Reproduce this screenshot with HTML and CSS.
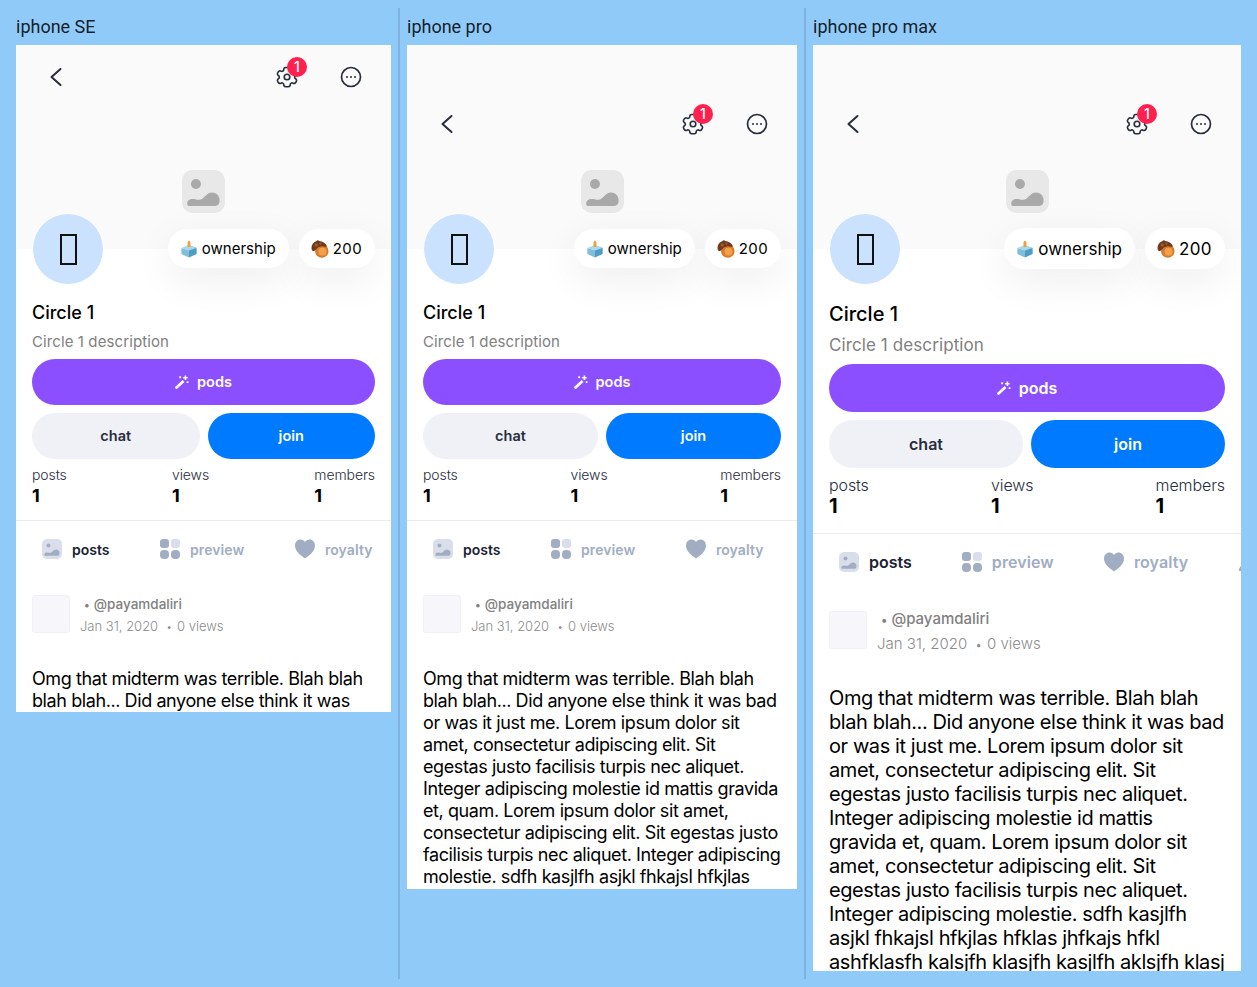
FILE: index.html
```html
<!DOCTYPE html>
<html lang="en">
<head>
<meta charset="utf-8">
<title>Circle devices</title>
<link rel="stylesheet" href="styles.css">
</head>
<body>
<svg class="sprites" width="0" height="0" aria-hidden="true">
  <symbol id="i-back" viewBox="0 0 24 24"><path d="M16.500 4 7.500 12l9 8" fill="none" stroke="#272d3d" stroke-width="2" stroke-linecap="round" stroke-linejoin="round"/></symbol>
  <symbol id="i-gear" viewBox="0 0 24 24"><g fill="none" stroke="#272d3d" stroke-width="1.6" stroke-linejoin="round"><circle cx="12" cy="12" r="2.800"/><path d="M21.300 7.900l-.6-1.100a1.900 1.900 0 0 0-2.600-.7 1.900 1.900 0 0 1-2.900-1.600c0-1-.9-2-1.900-2h-2.600c-1 0-1.900 1-1.900 2A1.900 1.900 0 0 1 5.900 6.100a1.900 1.900 0 0 0-2.600.7l-.6 1.100a1.900 1.900 0 0 0 .7 2.600 1.900 1.900 0 0 1 0 3.300 1.900 1.900 0 0 0-.7 2.600l.6 1.100a1.900 1.900 0 0 0 2.600.7 1.900 1.900 0 0 1 2.900 1.600c0 1 .9 1.900 1.900 1.900h2.600c1 0 1.900-.9 1.900-1.900a1.900 1.900 0 0 1 2.900-1.600 1.900 1.900 0 0 0 2.600-.7l.6-1.100a1.900 1.900 0 0 0-.7-2.600 1.900 1.900 0 0 1 0-3.300 1.900 1.900 0 0 0 .7-2.600z"/></g></symbol>
  <symbol id="i-more" viewBox="0 0 24 24"><circle cx="12" cy="12" r="9.500" fill="none" stroke="#272d3d" stroke-width="1.7"/><g fill="#272d3d"><circle cx="8" cy="12" r="1"/><circle cx="12" cy="12" r="1"/><circle cx="16" cy="12" r="1"/></g></symbol>
  <symbol id="i-pic" viewBox="0 0 20 20"><rect width="20" height="20" rx="5" fill="#d9deea"/><circle cx="6.500" cy="6.500" r="2" fill="#a1adc2"/><path d="M3.500 16.800c-1.500 0-1.500-2.500.2-3.100 1.800-.6 3.300.6 5 0 2-.7 2.800-3.200 5.300-3.200 2.300 0 3.500 1.900 3.500 3.700 0 1.800-1 2.600-2.500 2.600z" fill="#a1adc2"/></symbol>
  <symbol id="i-cover" viewBox="0 0 20 20"><rect width="20" height="20" rx="5" fill="#e8e8e8"/><circle cx="6.500" cy="6.500" r="2.300" fill="#a9a9a9"/><path d="M3.500 16.800c-1.500 0-1.500-2.500.2-3.100 1.800-.6 3.300.6 5 0 2-.7 2.800-3.200 5.300-3.200 2.300 0 3.500 1.900 3.500 3.700 0 1.800-1 2.600-2.500 2.600z" fill="#a9a9a9"/></symbol>
  <symbol id="i-grid" viewBox="0 0 20 20"><rect width="9" height="9" rx="3" fill="#a1adc2"/><rect x="11" width="9" height="9" rx="3" fill="#d9deea"/><rect y="11" width="9" height="9" rx="4" fill="#a1adc2"/><rect x="11" y="11" width="9" height="9" rx="4" fill="#a1adc2"/></symbol>
  <symbol id="i-heart" viewBox="0 0 20 20"><path d="M10 19.500C6 16.500 0 12.500 0 6.500 0 3 2.500.5 5.500.5c2 0 3.500 1 4.500 2.500C11 1.500 12.500.5 14.500.5 17.500.5 20 3 20 6.500c0 6-6 10-10 13z" fill="#a1adc2"/></symbol>
  <symbol id="i-person" viewBox="0 0 20 20"><circle cx="10" cy="6" r="4.500" fill="#d9deea"/><path d="M1 19c0-5 4-7 9-7s9 2 9 7z" fill="#a1adc2"/></symbol>
  <symbol id="i-wand" viewBox="0 0 16 16"><g fill="#fff"><path d="M.6 13.200 8.800 5.800l2 2.100-8 7.500a1.500 1.500 0 0 1-2.100-.1 1.500 1.500 0 0 1-.1-2.100z"/><rect x="4.800" y="1.500" width="2.200" height="2.200" rx=".5"/><path d="M11 .5h1.800v1.700h1.700V4h-1.700v1.700H11V4H9.300V2.200H11z"/><rect x="13.300" y="7" width="2.200" height="2.200" rx=".5"/></g></symbol>
  <symbol id="i-box" viewBox="0 0 20 20"><path d="M10 6l8.500 2.800v6.800L10 19.500z" fill="#4f9cc4"/><path d="M1.500 8.800 10 11.500v8l-8.500-3.900z" fill="#7fbfdc"/><path d="M10 5.500l8.500 3.300-8.500 3-8.500-3z" fill="#a9d8ea"/><path d="M8.300 3.500C8.300 2 9.200 1 10 .7c.8.300 1.700 1.300 1.700 2.800v4c-1.100.5-2.300.5-3.400 0z" fill="#f0a040"/></symbol>
  <symbol id="i-acorn" viewBox="0 0 20 20"><circle cx="12" cy="12.300" r="7.500" fill="#d9792a"/><circle cx="12.800" cy="13" r="4.500" fill="#f2a04a"/><path d="M1.100 11.500C-.5 7.500 1.500 2.500 5.700 1.300c1.200-1.200 2.600-1.300 3.300-.2 4 .2 7 2.300 8.300 5 .5 1.300-.5 2-1.700 1.500-3.100-1.200-7.400-.5-9.600 2.400-1 1.500-3.900 3.500-4.900 1.500z" fill="#6f3a1c"/><circle cx="5.800" cy="5.500" r="1.900" fill="#9a5a2c"/><circle cx="10.500" cy="4" r="1.300" fill="#9a5a2c"/></symbol>
</svg>

<main class="devices">

  <section class="device">
    <h2 class="device-name">iphone SE</h2>
    <article class="phone phone-se">
      <header class="cover">
        <nav class="nav">
          <button class="nav-btn"><svg class="nav-icon"><use href="#i-back"/></svg></button>
          <div class="nav-right">
            <button class="nav-btn"><svg class="nav-icon"><use href="#i-gear"/></svg><span class="count">1</span></button>
            <button class="nav-btn"><svg class="nav-icon"><use href="#i-more"/></svg></button>
          </div>
        </nav>
        <svg class="cover-pic"><use href="#i-cover"/></svg>
      </header>
      <div class="profile">
        <div class="profile-top">
          <div class="avatar"><span class="tofu"></span></div>
          <div class="chips">
            <span class="chip"><svg class="chip-icon"><use href="#i-box"/></svg>ownership</span>
            <span class="chip chip-num"><svg class="chip-icon"><use href="#i-acorn"/></svg>200</span>
          </div>
        </div>
        <h1 class="title">Circle 1</h1>
        <p class="desc">Circle 1 description</p>
        <button class="btn btn-pods"><svg class="wand"><use href="#i-wand"/></svg>pods</button>
        <div class="btn-row">
          <button class="btn btn-chat">chat</button>
          <button class="btn btn-join">join</button>
        </div>
        <dl class="stats">
          <div class="stat"><dt>posts</dt><dd>1</dd></div>
          <div class="stat"><dt>views</dt><dd>1</dd></div>
          <div class="stat"><dt>members</dt><dd>1</dd></div>
        </dl>
      </div>
      <div class="tabs">
        <span class="tab tab-active"><svg class="tab-icon"><use href="#i-pic"/></svg>posts</span>
        <span class="tab"><svg class="tab-icon"><use href="#i-grid"/></svg>preview</span>
        <span class="tab"><svg class="tab-icon"><use href="#i-heart"/></svg>royalty</span>
        <span class="tab"><svg class="tab-icon"><use href="#i-person"/></svg>members</span>
      </div>
      <div class="post">
        <div class="post-head">
          <div class="post-avatar"></div>
          <div class="post-meta">
            <div class="post-author"><span class="dot">•</span>@payamdaliri</div>
            <div class="post-date">Jan 31, 2020<span class="dot dot-wide">•</span>0 views</div>
          </div>
        </div>
        <p class="post-body">Omg that midterm was terrible. Blah blah blah blah... Did anyone else think it was bad or was it just me. Lorem ipsum dolor sit amet, consectetur adipiscing elit. Sit egestas justo facilisis turpis nec aliquet. Integer adipiscing molestie id mattis gravida et, quam. Lorem ipsum dolor sit amet, consectetur adipiscing elit. Sit egestas justo facilisis turpis nec aliquet. Integer adipiscing molestie. sdfh kasjlfh asjkl fhkajsl hfkjlas hfklas jhfkajs hfkl ashfklasfh kalsjfh klasjfh kasjlfh aklsjfh klasj</p>
      </div>
    </article>
  </section>

  <section class="device">
    <h2 class="device-name">iphone pro</h2>
    <article class="phone phone-pro">
      <header class="cover">
        <nav class="nav">
          <button class="nav-btn"><svg class="nav-icon"><use href="#i-back"/></svg></button>
          <div class="nav-right">
            <button class="nav-btn"><svg class="nav-icon"><use href="#i-gear"/></svg><span class="count">1</span></button>
            <button class="nav-btn"><svg class="nav-icon"><use href="#i-more"/></svg></button>
          </div>
        </nav>
        <svg class="cover-pic"><use href="#i-cover"/></svg>
      </header>
      <div class="profile">
        <div class="profile-top">
          <div class="avatar"><span class="tofu"></span></div>
          <div class="chips">
            <span class="chip"><svg class="chip-icon"><use href="#i-box"/></svg>ownership</span>
            <span class="chip chip-num"><svg class="chip-icon"><use href="#i-acorn"/></svg>200</span>
          </div>
        </div>
        <h1 class="title">Circle 1</h1>
        <p class="desc">Circle 1 description</p>
        <button class="btn btn-pods"><svg class="wand"><use href="#i-wand"/></svg>pods</button>
        <div class="btn-row">
          <button class="btn btn-chat">chat</button>
          <button class="btn btn-join">join</button>
        </div>
        <dl class="stats">
          <div class="stat"><dt>posts</dt><dd>1</dd></div>
          <div class="stat"><dt>views</dt><dd>1</dd></div>
          <div class="stat"><dt>members</dt><dd>1</dd></div>
        </dl>
      </div>
      <div class="tabs">
        <span class="tab tab-active"><svg class="tab-icon"><use href="#i-pic"/></svg>posts</span>
        <span class="tab"><svg class="tab-icon"><use href="#i-grid"/></svg>preview</span>
        <span class="tab"><svg class="tab-icon"><use href="#i-heart"/></svg>royalty</span>
        <span class="tab"><svg class="tab-icon"><use href="#i-person"/></svg>members</span>
      </div>
      <div class="post">
        <div class="post-head">
          <div class="post-avatar"></div>
          <div class="post-meta">
            <div class="post-author"><span class="dot">•</span>@payamdaliri</div>
            <div class="post-date">Jan 31, 2020<span class="dot dot-wide">•</span>0 views</div>
          </div>
        </div>
        <p class="post-body">Omg that midterm was terrible. Blah blah blah blah... Did anyone else think it was bad or was it just me. Lorem ipsum dolor sit amet, consectetur adipiscing elit. Sit egestas justo facilisis turpis nec aliquet. Integer adipiscing molestie id mattis gravida et, quam. Lorem ipsum dolor sit amet, consectetur adipiscing elit. Sit egestas justo facilisis turpis nec aliquet. Integer adipiscing molestie. sdfh kasjlfh asjkl fhkajsl hfkjlas hfklas jhfkajs hfkl ashfklasfh kalsjfh klasjfh kasjlfh aklsjfh klasj</p>
      </div>
    </article>
  </section>

  <section class="device">
    <h2 class="device-name">iphone pro max</h2>
    <article class="phone phone-max">
      <header class="cover">
        <nav class="nav">
          <button class="nav-btn"><svg class="nav-icon"><use href="#i-back"/></svg></button>
          <div class="nav-right">
            <button class="nav-btn"><svg class="nav-icon"><use href="#i-gear"/></svg><span class="count">1</span></button>
            <button class="nav-btn"><svg class="nav-icon"><use href="#i-more"/></svg></button>
          </div>
        </nav>
        <svg class="cover-pic"><use href="#i-cover"/></svg>
      </header>
      <div class="profile">
        <div class="profile-top">
          <div class="avatar"><span class="tofu"></span></div>
          <div class="chips">
            <span class="chip"><svg class="chip-icon"><use href="#i-box"/></svg>ownership</span>
            <span class="chip chip-num"><svg class="chip-icon"><use href="#i-acorn"/></svg>200</span>
          </div>
        </div>
        <h1 class="title">Circle 1</h1>
        <p class="desc">Circle 1 description</p>
        <button class="btn btn-pods"><svg class="wand"><use href="#i-wand"/></svg>pods</button>
        <div class="btn-row">
          <button class="btn btn-chat">chat</button>
          <button class="btn btn-join">join</button>
        </div>
        <dl class="stats">
          <div class="stat"><dt>posts</dt><dd>1</dd></div>
          <div class="stat"><dt>views</dt><dd>1</dd></div>
          <div class="stat"><dt>members</dt><dd>1</dd></div>
        </dl>
      </div>
      <div class="tabs">
        <span class="tab tab-active"><svg class="tab-icon"><use href="#i-pic"/></svg>posts</span>
        <span class="tab"><svg class="tab-icon"><use href="#i-grid"/></svg>preview</span>
        <span class="tab"><svg class="tab-icon"><use href="#i-heart"/></svg>royalty</span>
        <span class="tab"><svg class="tab-icon"><use href="#i-person"/></svg>members</span>
      </div>
      <div class="post">
        <div class="post-head">
          <div class="post-avatar"></div>
          <div class="post-meta">
            <div class="post-author"><span class="dot">•</span>@payamdaliri</div>
            <div class="post-date">Jan 31, 2020<span class="dot dot-wide">•</span>0 views</div>
          </div>
        </div>
        <p class="post-body">Omg that midterm was terrible. Blah blah blah blah... Did anyone else think it was bad or was it just me. Lorem ipsum dolor sit amet, consectetur adipiscing elit. Sit egestas justo facilisis turpis nec aliquet. Integer adipiscing molestie id mattis gravida et, quam. Lorem ipsum dolor sit amet, consectetur adipiscing elit. Sit egestas justo facilisis turpis nec aliquet. Integer adipiscing molestie. sdfh kasjlfh asjkl fhkajsl hfkjlas hfklas jhfkajs hfkl ashfklasfh kalsjfh klasjfh kasjlfh aklsjfh klasj</p>
      </div>
    </article>
  </section>

</main>
</body>
</html>
```
FILE: styles.css
```css
* { box-sizing: border-box; }

html, body { height: 100%; }

body {
  margin: 0;
  background: #90caf9;
  font-family: Inter, "Liberation Sans", sans-serif;
  color: #000;
}

.sprites { position: absolute; }

.devices {
  display: flex;
  height: 987px;
  padding: 8px 0 8px 9px;
}

.device {
  flex: none;
  padding: 0 7px;
  border-right: 2px solid #7fb2df;
}

.device:last-child { border-right: 0; }

.device-name {
  margin: 0 0 8px;
  padding-top: 8px;
  font: 400 18px/21px Roboto, sans-serif;
  color: rgba(0, 0, 0, .87);
}

.phone {
  display: flex;
  flex-direction: column;
  overflow: hidden;
  background: #fff;
  --side: 16px;
  --nav-top: 10px;
  --title: 18px;
  --title-lh: 22px;
  --title-mb: 9px;
  --desc: 15px;
  --desc-lh: 18px;
  --desc-mb: 8px;
  --btn-h: 46px;
  --btn: 14.500px;
  --label: 14px;
  --label-lh: 17px;
  --stat-top: 7px;
  --stat-gap: 2px;
  --stat-pb: 13px;
  --value: 18px;
  --value-lh: 22px;
  --tab: 14px;
  --tab-gap: 50.500px;
  --author: 13.500px;
  --date: 13px;
  --meta-lh: 21px;
  --meta-top: -1px;
  --post-gap: 18px;
  --body: 18px;
  --body-lh: 22px;
  --body-top: 35px;
  --chip: 15px;
  --chip-h: 39px;
  --chip-top: 16px;
}

.phone-se { width: 375px; height: 667px; }
.phone-pro { width: 390px; height: 844px; --nav-top: 57px; }
.phone-max {
  width: 428px;
  height: 926px;
  --nav-top: 57px;
  --title: 20px;
  --title-lh: 24px;
  --title-mb: 8px;
  --desc: 17px;
  --desc-lh: 22px;
  --desc-mb: 8px;
  --btn-h: 48px;
  --btn: 16px;
  --label: 16px;
  --label-lh: 19px;
  --stat-top: 8px;
  --stat-gap: -1px;
  --stat-pb: 15px;
  --value: 20px;
  --value-lh: 24px;
  --tab: 16px;
  --tab-gap: 50px;
  --author: 15px;
  --date: 15px;
  --meta-lh: 24px;
  --meta-top: -4px;
  --post-gap: 21px;
  --body: 20px;
  --body-lh: 24px;
  --body-top: 37px;
  --chip: 17px;
  --chip-h: 41px;
  --chip-top: 15px;
}

.cover {
  display: flex;
  flex: none;
  flex-direction: column;
  height: 204px;
  padding-top: var(--nav-top);
  background: #fafafa;
}

.nav {
  display: flex;
  justify-content: space-between;
  height: 44px;
  padding: 0 8px;
}

.nav-right { display: flex; }

.nav-btn {
  position: relative;
  display: flex;
  align-items: center;
  justify-content: center;
  width: 64px;
  height: 44px;
  padding: 0;
  border: 0;
  background: none;
}

.nav-icon { width: 24px; height: 24px; }

.count {
  position: absolute;
  top: 2px;
  left: 32px;
  width: 20px;
  height: 20px;
  border-radius: 50%;
  background: #ff2050;
  color: #fff;
  font: 500 14px/20px Inter, sans-serif;
  text-align: center;
}

.cover-pic {
  flex: none;
  align-self: center;
  width: 43px;
  height: 43px;
  margin-top: auto;
  margin-bottom: 36px;
}

.profile {
  position: relative;
  flex: none;
  padding: 0 var(--side) var(--stat-pb);
  border-bottom: 1px solid #ebebeb;
}

.profile-top {
  display: flex;
  justify-content: space-between;
  height: 72px;
  margin-top: -36px;
}

.avatar {
  display: flex;
  align-items: center;
  justify-content: center;
  width: 72px;
  height: 72px;
  border: 1px solid #fff;
  border-radius: 50%;
  background: #cbe2ff;
}

.tofu {
  width: 17px;
  height: 31px;
  border: 2px solid #111;
}

.chips {
  display: flex;
  gap: 10px;
  align-items: flex-start;
  padding-top: var(--chip-top);
}

.chip {
  display: flex;
  gap: 4px;
  align-items: center;
  height: var(--chip-h);
  padding: 0 13px 0 12px;
  border-radius: 21px;
  background: #fff;
  box-shadow: 0 12px 40px rgba(0, 0, 0, .07);
  font-size: var(--chip);
  white-space: nowrap;
}

.chip-num { letter-spacing: .4px; }

.chip-icon { width: 18px; height: 18px; }

.title {
  margin: 17px 0 var(--title-mb);
  font-size: var(--title);
  font-weight: 500;
  line-height: var(--title-lh);
}

.desc {
  margin: 0 0 var(--desc-mb);
  color: #808080;
  font-size: var(--desc);
  letter-spacing: .1px;
  line-height: var(--desc-lh);
}

.btn {
  display: flex;
  flex: 1;
  gap: 8px;
  align-items: center;
  justify-content: center;
  width: 100%;
  height: var(--btn-h);
  padding: 0 0 1px;
  border: 0;
  border-radius: 24px;
  font-family: inherit;
  font-size: var(--btn);
  font-weight: 600;
}

.btn-pods { background: #8c4fff; color: #fff; }
.btn-chat { background: #f0f1f6; color: #272d3d; }
.btn-join { background: #007aff; color: #fff; }

.wand { width: 14px; height: 14px; }

.btn-row {
  display: flex;
  gap: 8px;
  margin-top: 8px;
}

.stats {
  display: flex;
  justify-content: space-between;
  margin: var(--stat-top) 0 0;
}

.stat dt {
  color: #272d3d;
  font-size: var(--label);
  font-weight: 300;
  letter-spacing: -.1px;
  line-height: var(--label-lh);
}

.stat dd {
  margin: var(--stat-gap) 0 0;
  font-size: var(--value);
  font-weight: 700;
  line-height: var(--value-lh);
}

.tabs {
  display: flex;
  flex: none;
  gap: var(--tab-gap);
  align-items: center;
  height: 56px;
  padding-left: 26px;
  overflow: hidden;
}

.tab {
  display: flex;
  flex: none;
  gap: 10px;
  align-items: center;
  color: #a1adc2;
  font-size: var(--tab);
  font-weight: 600;
  letter-spacing: .1px;
}

.tab-active { color: #1b2233; letter-spacing: 0; }

.tab-icon { width: 20px; height: 20px; }

.post {
  flex: 1;
  min-height: 0;
  padding: var(--post-gap) var(--side) 0;
}

.post-head {
  display: flex;
  gap: 10px;
  height: 38px;
}

.post-avatar {
  flex: none;
  width: 38px;
  height: 38px;
  border: 1px solid #f0f0f5;
  border-radius: 3px;
  background: #f6f6fb;
}

.post-meta {
  margin-top: var(--meta-top);
  line-height: var(--meta-lh);
}

.post-author { color: #808080; font-size: var(--author); font-weight: 500; }
.post-date { color: #8c8c8c; font-size: var(--date); font-weight: 300; }

.dot { display: inline-block; margin: 0 4px; font-size: .8em; }
.dot-wide { margin: 0 5px 0 8px; }

.post-body {
  margin: var(--body-top) 0 0;
  font-size: var(--body);
  letter-spacing: -.41px;
  line-height: var(--body-lh);
}
```
